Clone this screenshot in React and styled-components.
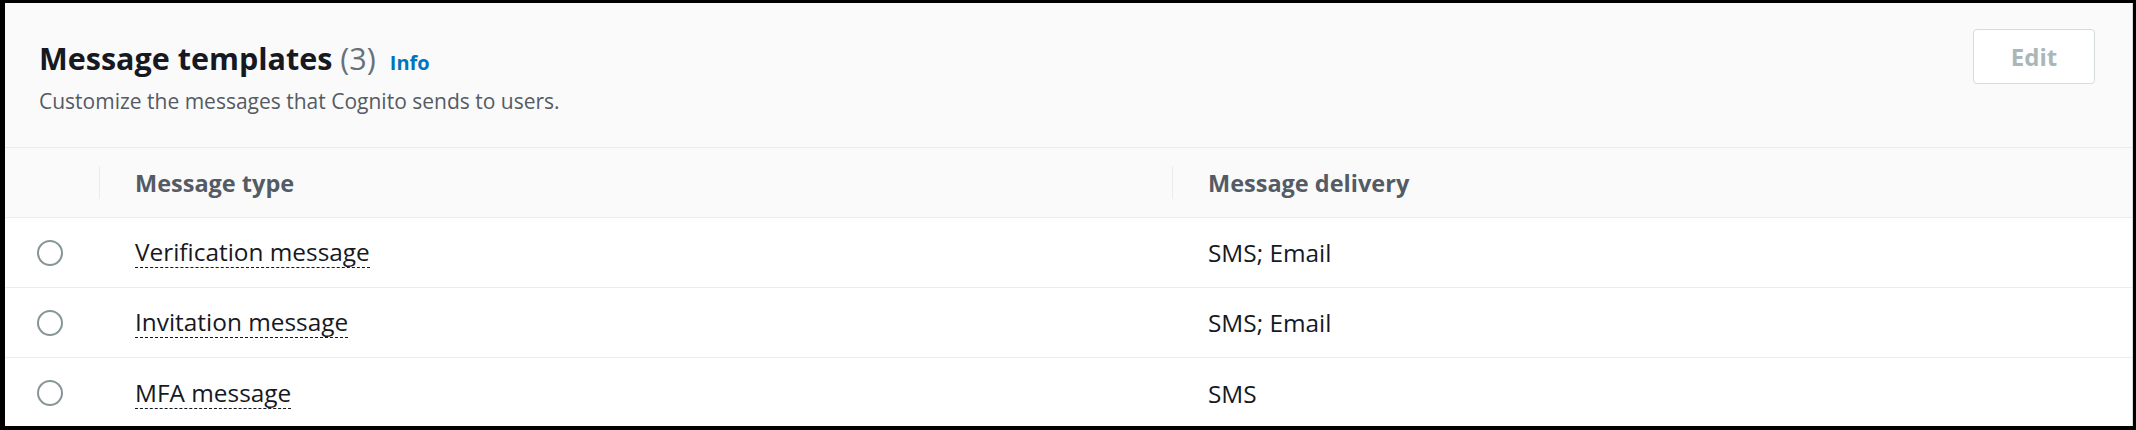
import React from 'react';
import styled, { createGlobalStyle } from 'styled-components';

const GlobalStyle = createGlobalStyle`
  html, body {
    margin: 0;
    padding: 0;
    background: #000;
  }
  body {
    font-family: 'Open Sans', 'Liberation Sans', sans-serif;
    -webkit-font-smoothing: antialiased;
  }
  * {
    box-sizing: border-box;
  }
`;

const Frame = styled.div`
  padding: 3px 3px 4px 5px;
  height: 430px;
`;

const Panel = styled.div`
  height: 423px;
  background: #fff;
  border-right: 1px solid #d5dbdb;
  overflow: hidden;
`;

const Header = styled.div`
  display: flex;
  justify-content: space-between;
  align-items: flex-start;
  height: 145px;
  padding: 26px 37px 0 34px;
  background: #fafafa;
  border-bottom: 1px solid #eaeded;
`;

const TitleBlock = styled.div`
  display: flex;
  flex-direction: column;
  margin-top: 7px;
`;

const Title = styled.h2`
  margin: 0;
  display: flex;
  align-items: baseline;
  font-size: 30.5px;
  line-height: 44px;
  font-weight: 700;
  color: #16191f;
`;

const Count = styled.span`
  margin-left: 8px;
  font-weight: 400;
  color: #687078;
`;

const InfoLink = styled.a`
  margin-left: 14px;
  font-size: 20px;
  font-weight: 700;
  color: #0073bb;
  text-decoration: none;
`;

const Description = styled.p`
  margin: 1px 0 0;
  font-size: 21px;
  line-height: 30px;
  color: #545b64;
`;

const EditButton = styled.button`
  width: 122px;
  height: 55px;
  border: 1px solid #d5dbdb;
  border-radius: 4px;
  background: #fff;
  color: #aab7b8;
  font-family: inherit;
  font-size: 24px;
  font-weight: 700;
  cursor: default;
`;

const Grid = styled.div`
  display: grid;
  grid-template-columns: 94px 1073px 1fr;
`;

const HeadCell = styled.div`
  position: relative;
  display: flex;
  align-items: center;
  height: 70px;
  padding-left: 36px;
  background: #fafafa;
  border-bottom: 1px solid #eaeded;
  font-size: 23.5px;
  font-weight: 700;
  color: #545b64;

  ${p =>
    p.divider &&
    `
    &::before {
      content: '';
      position: absolute;
      left: 0;
      top: 18px;
      height: 33px;
      border-left: 1px solid #eaeded;
    }
  `}
`;

const Cell = styled.div`
  display: flex;
  align-items: center;
  height: 70px;
  padding-left: ${p => (p.radio ? '0' : '36px')};
  justify-content: ${p => (p.radio ? 'center' : 'flex-start')};
  border-bottom: ${p => (p.last ? 'none' : '1px solid #eaeded')};
  font-size: 24.4px;
  color: #16191f;
`;

const Radio = styled.span`
  display: block;
  width: 26px;
  height: 26px;
  margin-right: 4px;
  border: 2px solid #879596;
  border-radius: 50%;
  background: #fff;
`;

const NameLink = styled.span`
  line-height: 30px;
  border-bottom: 1px dashed #16191f;
`;

const templates = [
  { name: 'Verification message', delivery: 'SMS; Email' },
  { name: 'Invitation message', delivery: 'SMS; Email' },
  { name: 'MFA message', delivery: 'SMS' }
];

const App = () => {
  return (
    <>
      <GlobalStyle />
      <Frame>
        <Panel>
          <Header>
            <TitleBlock>
              <Title>
                Message templates<Count>(3)</Count>
                <InfoLink href='#'>Info</InfoLink>
              </Title>
              <Description>
                Customize the messages that Cognito sends to users.
              </Description>
            </TitleBlock>
            <EditButton disabled>Edit</EditButton>
          </Header>
          <Grid>
            <HeadCell />
            <HeadCell divider>Message type</HeadCell>
            <HeadCell divider>Message delivery</HeadCell>
            {templates.map((t, i) => {
              const last = i === templates.length - 1;
              return (
                <React.Fragment key={t.name}>
                  <Cell radio last={last}>
                    <Radio />
                  </Cell>
                  <Cell last={last}>
                    <NameLink>{t.name}</NameLink>
                  </Cell>
                  <Cell last={last}>{t.delivery}</Cell>
                </React.Fragment>
              );
            })}
          </Grid>
        </Panel>
      </Frame>
    </>
  );
};

export default App;
